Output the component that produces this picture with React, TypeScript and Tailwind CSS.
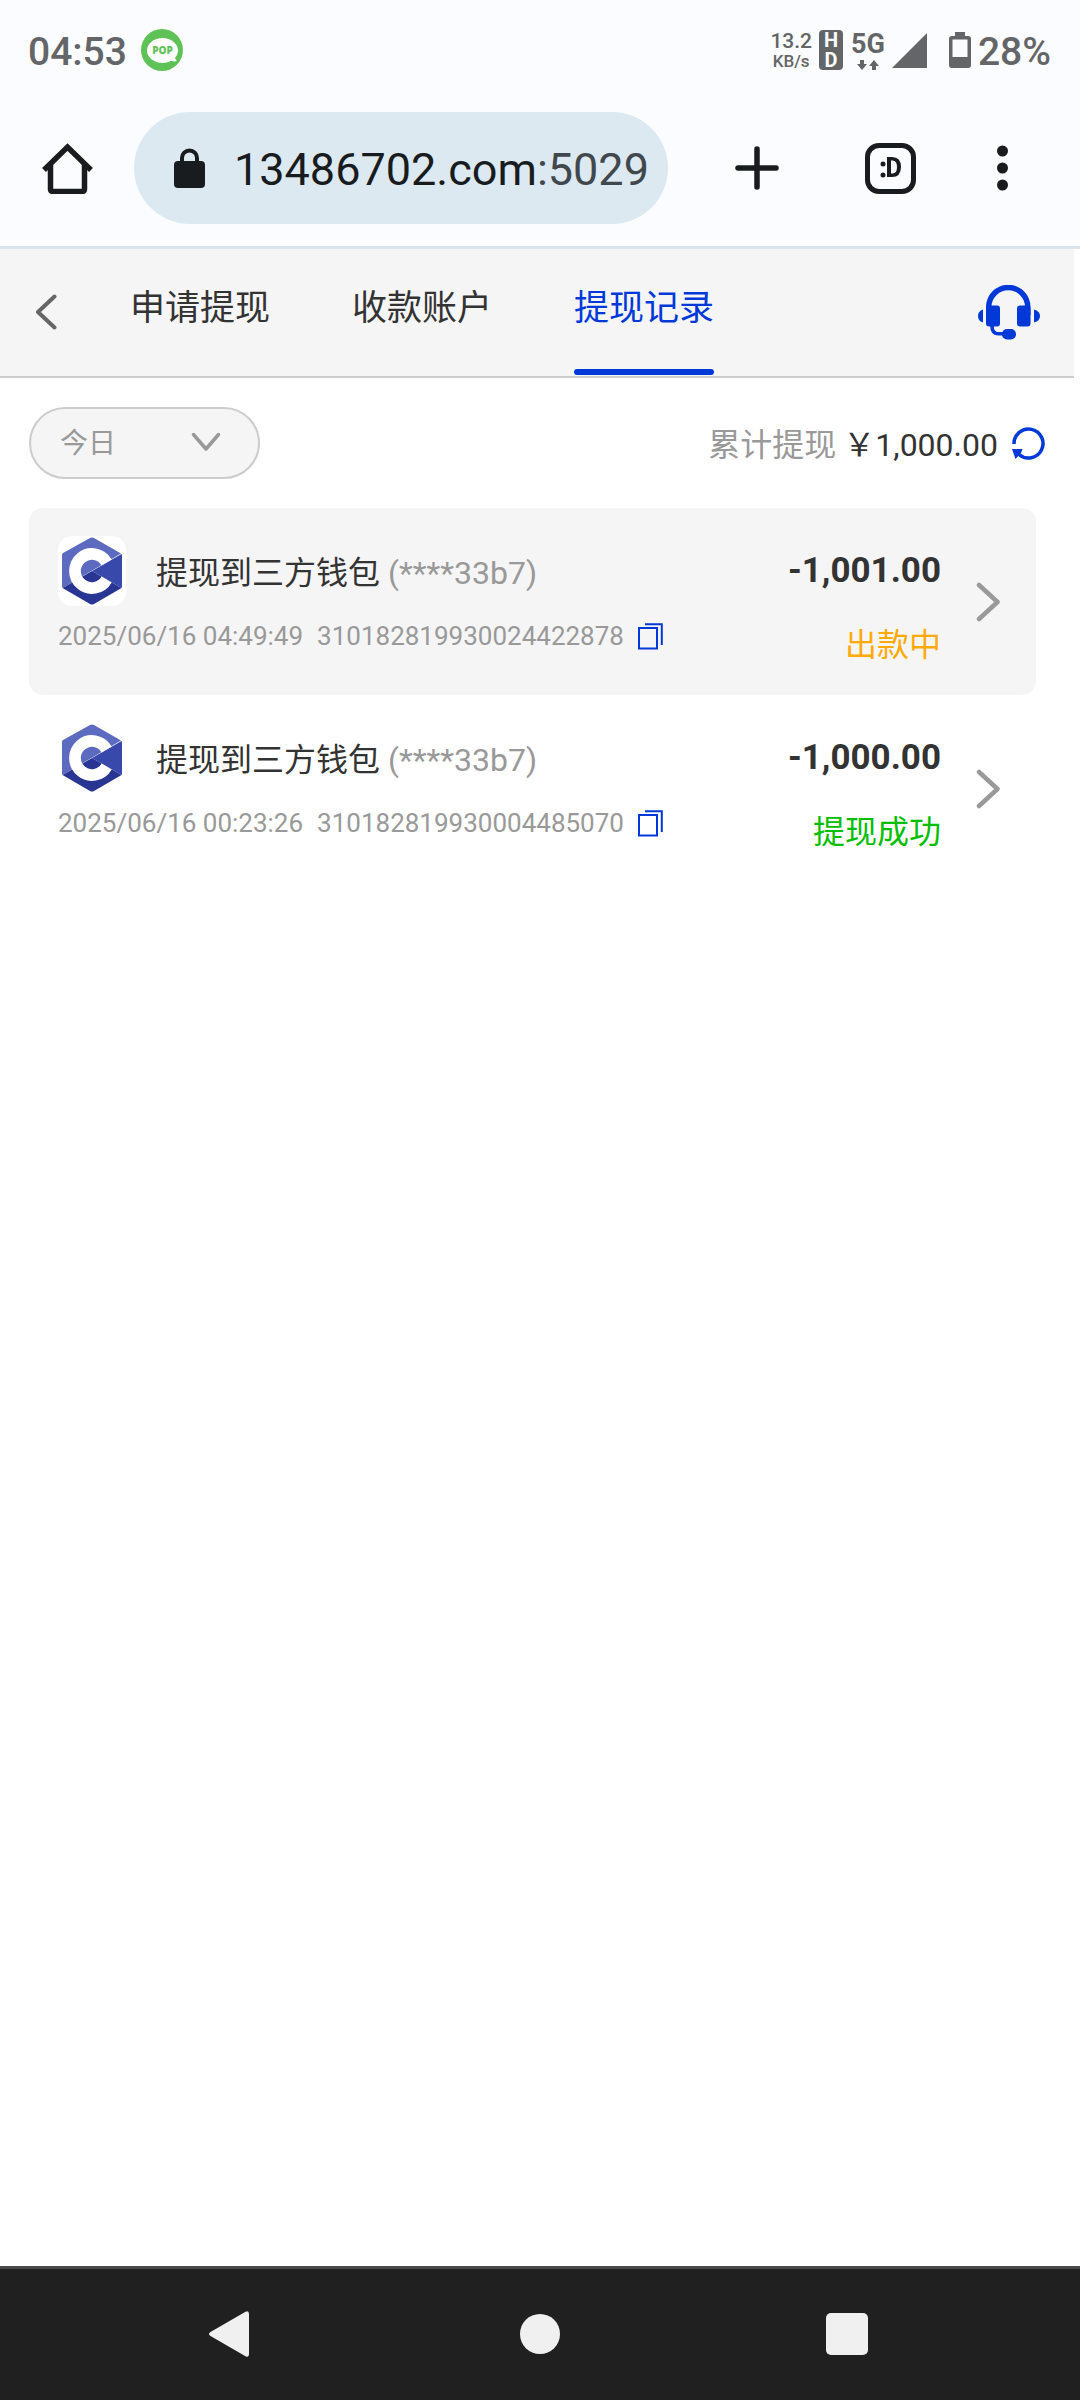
import { useState } from 'react';

interface WithdrawRecord {
  id: string;
  title: string;
  account: string;
  time: string;
  amount: string;
  status: 'pending' | 'success';
}

const tabs = [
  { id: 'apply', label: '申请提现' },
  { id: 'accounts', label: '收款账户' },
  { id: 'records', label: '提现记录' },
];

const records: WithdrawRecord[] = [
  {
    id: '310182819930024422878',
    title: '提现到三方钱包',
    account: '(****33b7)',
    time: '2025/06/16 04:49:49',
    amount: '-1,001.00',
    status: 'pending',
  },
  {
    id: '310182819930004485070',
    title: '提现到三方钱包',
    account: '(****33b7)',
    time: '2025/06/16 00:23:26',
    amount: '-1,000.00',
    status: 'success',
  },
];

const statusMap = {
  pending: { label: '出款中', className: 'text-[#ffaa09]' },
  success: { label: '提现成功', className: 'text-[#04be02]' },
};

function StatusBar() {
  return (
    <div className="flex h-[90px] items-center justify-between pt-[10px] pr-[29px] pl-[28px] text-[#646567]">
      <div className="flex items-center gap-[14px]">
        <span className="pt-[3px] text-[39px] leading-[48px] font-medium">04:53</span>
        <svg width="42" height="42" viewBox="0 0 42 42">
          <circle cx="21" cy="21" r="21" fill="#5fc256" />
          <ellipse cx="21.5" cy="21.5" rx="15.5" ry="12.5" fill="#fff" />
          <path d="M28 31c3 1 5 2 8 1-1-1-2-2-2-4z" fill="#fff" />
          <text x="21.5" y="25" textAnchor="middle" fontSize="10" fontWeight="800" fontFamily="Open Sans, sans-serif" fill="#5fc256">
            POP
          </text>
        </svg>
      </div>
      <div className="flex items-center">
        <div className="flex flex-col items-center pt-[2px] font-medium">
          <span className="text-[21px] leading-[20px]">13.2</span>
          <span className="text-[17px] leading-[20px]">KB/s</span>
        </div>
        <div className="ml-[7px] flex h-[40px] w-[24px] flex-col items-center justify-center rounded-[4px] bg-[#646567] text-[20px] leading-[20px] font-bold text-[#fbfcff]">
          <span>H</span>
          <span>D</span>
        </div>
        <div className="ml-[8px] flex flex-col items-center">
          <span className="text-[27px] leading-[26px] font-bold">5G</span>
          <svg width="22" height="10" viewBox="0 0 22 10" className="mt-[3px]" fill="currentColor">
            <path d="M3 0h4v4h3L5 10 0 4h3z" />
            <path d="M15 10h4V6h3L17 0l-5 6h3z" />
          </svg>
        </div>
        <svg width="35" height="35" viewBox="0 0 35 35" className="ml-[7px]" fill="currentColor">
          <path d="M35 0v35H0z" />
        </svg>
        <svg width="22" height="36" viewBox="0 0 22 36" className="ml-[22px]" fill="currentColor">
          <path fillRule="evenodd" d="M6 0h10v4h3q3 0 3 3v26q0 3-3 3H3q-3 0-3-3V7q0-3 3-3h3zM3.5 7.500v17.500h15V7.500z" />
        </svg>
        <span className="ml-[7px] pt-[3px] text-[39px] leading-[48px] font-medium">28%</span>
      </div>
    </div>
  );
}

function BrowserBar() {
  return (
    <div className="flex h-[159px] items-center border-b-[3px] border-[#dce4eb] pr-[72px] pl-[42px] text-[#191c1e]">
      <button aria-label="主页">
        <svg width="51" height="51" viewBox="0 0 51 51" fill="none" stroke="currentColor" strokeWidth="5.500">
          <path d="M2 27L25.500 4 49 27" strokeLinejoin="miter" />
          <path d="M8.500 21v25q0 2.500 2.500 2.500h29q2.500 0 2.500-2.500V21" />
        </svg>
      </button>
      <button className="ml-[41px] flex h-[112px] min-w-0 flex-1 items-center rounded-full bg-[#dde9f1] pl-[40px]">
        <svg width="31" height="40" viewBox="0 0 31 40" className="shrink-0">
          <rect y="13" width="31" height="27" rx="4" fill="currentColor" />
          <path d="M8 15V10a7.500 7.500 0 0 1 15 0v5" fill="none" stroke="currentColor" strokeWidth="4" />
        </svg>
        <span className="ml-[29px] pt-[3px] text-[45px] leading-[56px] whitespace-nowrap">
          13486702.com<span className="text-[#41484d]">:5029</span>
        </span>
      </button>
      <button aria-label="新标签页" className="ml-[67px]">
        <svg width="44" height="44" viewBox="0 0 44 44" stroke="currentColor" strokeWidth="5.500" strokeLinecap="round">
          <path d="M22 3v38M3 22h38" />
        </svg>
      </button>
      <button
        aria-label="标签页"
        className="ml-[86px] flex h-[51px] w-[51px] items-center justify-center rounded-[14px] border-[5px] border-[#191c1e] pb-[2px] text-[28px] leading-none font-bold"
      >
        <svg width="22" height="22" viewBox="0 0 22 22" fill="currentColor">
          <circle cx="3" cy="8" r="2.500" />
          <circle cx="3" cy="19" r="2.500" />
          <path fillRule="evenodd" d="M7 1h5q9 0 9 10t-9 10H7zM11 4.500v13h1.500q4.500 0 4.500-6.500t-4.500-6.500z" />
        </svg>
      </button>
      <button aria-label="更多" className="ml-[81px]">
        <svg width="11" height="46" viewBox="0 0 11 46" fill="currentColor">
          <circle cx="5.500" cy="6" r="5.500" />
          <circle cx="5.500" cy="23" r="5.500" />
          <circle cx="5.500" cy="40" r="5.500" />
        </svg>
      </button>
    </div>
  );
}

function ServiceIcon() {
  return (
    <svg width="62" height="55" viewBox="0 0 62 55" fill="#0039d8">
      <path d="M8 30V22a22.250 22.250 0 0 1 44.500 0v8H47V22a16.750 16.750 0 0 0-33.500 0v8z" />
      <rect x="8" y="20.500" width="14" height="21" rx="3" />
      <rect x="39" y="20.500" width="13.500" height="21" rx="3" />
      <path d="M5 24.500v13Q0 36 0 31t5-6.500z" />
      <path d="M56 24.500v13q6-1.500 6-6.500t-6-6.500z" />
      <path d="M14 41c0 5 2 7.800 6.500 7.800H26" fill="none" stroke="#0039d8" strokeWidth="3.600" />
      <rect x="24" y="44" width="14" height="10.500" rx="5" />
    </svg>
  );
}

function WalletLogo() {
  return (
    <svg width="68" height="70" viewBox="0 0 68 70" className="rounded-[14px] bg-white">
      <path d="M32 2q2-1 4 0l27 15.500L4.500 52Q4 51 4 50V19q0-1.500 1-2z" fill="#5c6bc0" />
      <path d="M34 35l29.500-17q.5.500.5 1.500v31q0 1-.5 1.500z" fill="#3949ab" />
      <path d="M34 35l29.500 17-27.500 16q-2 1-4 0L4.500 52z" fill="#283593" />
      <path d="M48.700 43.500A17 17 0 1 1 48.700 26.500" fill="none" stroke="#fff" strokeWidth="11.700" />
    </svg>
  );
}

function RecordItem({ record, active }: { record: WithdrawRecord; active: boolean }) {
  const status = statusMap[record.status];

  return (
    <li className={`flex h-[187px] items-center rounded-[14px] pr-[36px] pl-[29px] ${active ? 'bg-[#f5f5f5]' : ''}`}>
      <div className="flex h-[131px] min-w-0 flex-1 flex-col">
        <div className="flex items-center">
          <WalletLogo />
          <p className="ml-[30px] pt-[3px] text-[32px] leading-[40px] whitespace-nowrap text-[#333]">
            {record.title} <span className="text-[#999]">{record.account}</span>
          </p>
        </div>
        <div className="mt-[13px] flex items-center text-[26px] leading-[34px] whitespace-nowrap text-[#999]">
          <span>{record.time}</span>
          <span className="ml-[14px]">{record.id}</span>
          <button aria-label="复制" className="ml-[14px]">
            <svg width="25" height="27" viewBox="0 0 25 27" fill="none" stroke="#0039d8" strokeWidth="2">
              <path d="M1 5h18v20.500H1z" />
              <path d="M7 1.200h16.800V22" />
            </svg>
          </button>
        </div>
      </div>
      <div className="flex h-[131px] flex-col items-end">
        <span className="mt-[15px] text-[35px] leading-[40px] font-bold text-[#333]">{record.amount}</span>
        <span className={`mt-[34px] text-[32px] leading-[40px] ${status.className}`}>{status.label}</span>
      </div>
      <button aria-label="详情" className="ml-[35px]">
        <svg width="24" height="40" viewBox="0 0 24 40" fill="none" stroke="#999" strokeWidth="4.500" strokeLinecap="round" strokeLinejoin="round">
          <path d="M3 3l18.500 17L3 37" />
        </svg>
      </button>
    </li>
  );
}

function AndroidNav() {
  return (
    <nav className="flex h-[134px] items-center justify-between border-t-[3px] border-[#4a4a4a] bg-[#202020] pr-[212px] pb-[2px] pl-[209px] text-[#f0f0f0]">
      <button aria-label="返回">
        <svg width="44" height="46" viewBox="0 0 44 46" fill="currentColor">
          <path d="M36.500.700Q40-1 40 3v40q0 4-3.500 2.300L1.500 25q-3-2 0-4z" />
        </svg>
      </button>
      <button aria-label="主屏幕" className="h-[40px] w-[40px] rounded-full bg-[#f0f0f0]" />
      <button aria-label="最近任务" className="h-[42px] w-[42px] rounded-[5px] bg-[#f0f0f0]" />
    </nav>
  );
}

export default function App() {
  const [activeTab, setActiveTab] = useState('records');
  const [range, setRange] = useState('today');

  return (
    <div className="flex min-h-screen flex-col bg-white font-[Roboto,'Noto_Sans_CJK_SC',sans-serif]">
      <div className="bg-[#fbfcff]">
        <StatusBar />
        <BrowserBar />
      </div>

      <div className="flex flex-1 flex-col pr-[6px]">
        {/* Header */}
        <header className="flex h-[129px] items-center border-b-2 border-[#ccc] bg-[#f5f5f5] pr-[34px] pb-px pl-[35px]">
          <button aria-label="返回">
            <svg width="22" height="36" viewBox="0 0 22 36" fill="none" stroke="#666" strokeWidth="4" strokeLinecap="round" strokeLinejoin="round">
              <path d="M19.500 2.500L3 18l16.500 15.500" />
            </svg>
          </button>
          <div className="ml-[73px] flex flex-1 gap-[82px] self-stretch">
            {tabs.map((tab) => (
              <button
                key={tab.id}
                onClick={() => setActiveTab(tab.id)}
                className={`flex flex-col items-center justify-between text-[35px] leading-[120px] whitespace-nowrap ${
                  activeTab === tab.id ? 'text-[#0039d8]' : 'text-[#333]'
                }`}
              >
                <span>{tab.label}</span>
                {activeTab === tab.id && <span className="h-[6px] w-full rounded-full bg-[#0039d8]" />}
              </button>
            ))}
          </div>
          <button aria-label="客服">
            <ServiceIcon />
          </button>
        </header>

        {/* Filter */}
        <div className="flex items-center justify-between pt-[29px] pr-[29px] pl-[29px]">
          <div className="relative">
            <select
              aria-label="日期"
              value={range}
              onChange={(e) => setRange(e.target.value)}
              className="h-[72px] w-[231px] appearance-none rounded-full border-2 border-[#ccc] bg-[#f5f5f5] pt-[2px] pl-[29px] text-[28px] text-[#999]"
            >
              <option value="today">今日</option>
              <option value="yesterday">昨日</option>
              <option value="week">近7日</option>
            </select>
            <svg
              width="30"
              height="20"
              viewBox="0 0 30 20"
              className="pointer-events-none absolute top-[25px] right-[39px]"
              fill="none"
              stroke="#999"
              strokeWidth="3.500"
              strokeLinecap="round"
              strokeLinejoin="round"
            >
              <path d="M2.500 2.500L15 17 27.500 2.500" />
            </svg>
          </div>
          <div className="flex items-center text-[32px] leading-[40px] text-[#333]">
            <span className="pt-[3px] text-[#999]">累计提现</span>
            <span className="ml-[7px] pt-[3px]">￥1,000.00</span>
            <button aria-label="刷新" className="ml-[14px]">
              <svg width="33" height="33" viewBox="0 0 33 33">
                <path d="M2 17A14.500 14.500 0 1 1 7 27.500" fill="none" stroke="#0039d8" strokeWidth="3.500" />
                <path d="M0 22h10.500L9 26l-5.500 6z" fill="#0039d8" />
              </svg>
            </button>
          </div>
        </div>

        {/* Records */}
        <ul className="mt-[29px] mr-[38px] ml-[29px]">
          {records.map((record, index) => (
            <RecordItem key={record.id} record={record} active={index === 0} />
          ))}
        </ul>
      </div>

      <AndroidNav />
    </div>
  );
}
